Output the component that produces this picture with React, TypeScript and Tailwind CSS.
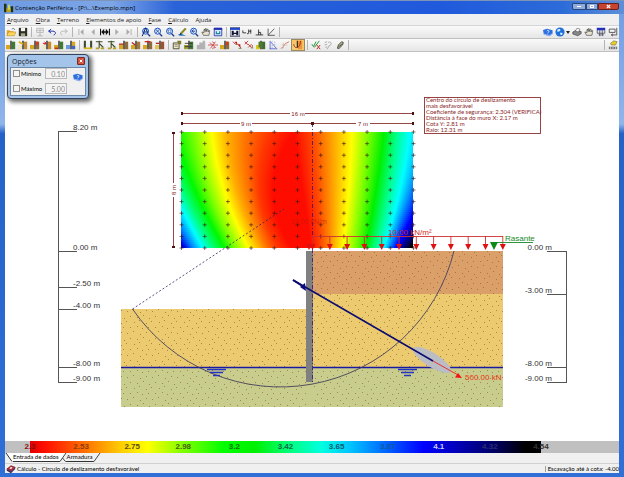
import React, { useState } from 'react';

type Tool = { id: string; label: string; off?: boolean; on?: boolean; menu?: boolean } | null;

const menus = ['Arquivo', 'Obra', 'Terreno', 'Elementos de apoio', 'Fase', 'Cálculo', 'Ajuda'];

const mainTools: Tool[] = [
  { id: 'open', label: 'Abrir' },
  { id: 'save', label: 'Salvar' },
  null,
  { id: 'views', label: 'Vistas', off: true },
  { id: 'undo', label: 'Desfazer' },
  { id: 'redo', label: 'Refazer', off: true },
  null,
  { id: 'first', label: 'Primeira fase', off: true },
  { id: 'prev', label: 'Fase anterior', off: true },
  { id: 'phases', label: 'Lista de fases' },
  { id: 'next', label: 'Fase seguinte', off: true },
  { id: 'last', label: 'Última fase', off: true },
  null,
  { id: 'zoomAll', label: 'Zoom total' },
  { id: 'zoomX', label: 'Zoom duplo' },
  { id: 'zoomWin', label: 'Zoom janela' },
  { id: 'pencil', label: 'Redesenhar' },
  { id: 'zoomPrev', label: 'Zoom anterior' },
  { id: 'hand', label: 'Mover' },
  { id: 'window', label: 'Janela' },
  null,
  { id: 'snap', label: 'Capturas' },
  { id: 'coords', label: 'Coordenadas' },
  { id: 'ortho', label: 'Ortogonal' },
  { id: 'angle', label: 'Ângulo' },
  null,
];

const sideTools: Tool[] = [
  { id: 'help', label: 'Manual' },
  { id: 'globe', label: 'Internet', menu: true },
  { id: 'printer', label: 'Imprimir' },
  { id: 'hand', label: 'Configuração' },
  { id: 'grid', label: 'Barra de ferramentas' },
  { id: 'dock', label: 'Janela principal' },
];

const workTools: Tool[] = [
  { id: 'wallA', label: 'Muro' },
  { id: 'wallB', label: 'Dados do muro' },
  { id: 'wallC', label: 'Terreno trasdós' },
  { id: 'wallD', label: 'Terreno intradós' },
  { id: 'wallE', label: 'Rocha' },
  { id: 'wallF', label: 'Nível freático' },
  null,
  { id: 'trench', label: 'Escavação' },
  { id: 'anchor', label: 'Ancoragem ativa' },
  { id: 'anchor', label: 'Ancoragem passiva' },
  { id: 'wallG', label: 'Escora' },
  { id: 'wallH', label: 'Laje' },
  { id: 'wallI', label: 'Carga no topo' },
  { id: 'wallJ', label: 'Carga no terreno' },
  null,
  { id: 'sheet', label: 'Dados gerais' },
  { id: 'wallK', label: 'Editar fase' },
  { id: 'blocks', label: 'Apagar fase', off: true },
  { id: 'redX', label: 'Esforços' },
  { id: 'wallC', label: 'Empuxos' },
  { id: 'redSlope', label: 'Deslocamentos' },
  { id: 'redTicks', label: 'Cargas' },
  { id: 'wallL', label: 'Pressões' },
  { id: 'curves', label: 'Gráficos' },
  { id: 'slope', label: 'Talude' },
  { id: 'circle', label: 'Círculo de deslizamento', on: true },
  null,
  { id: 'check', label: 'Verificar' },
  { id: 'lens', label: 'Consultar', off: true },
  { id: 'clip', label: 'Listagens' },
  null,
];

// soil in front of the wall, the wall and the soil behind it
const Wall = ({ left, right, children }: { left: string; right: string; children?: React.ReactNode }) => (
  <>
    <path d="M0 6h5v5H0z" fill={left} />
    <path d="M7 2h4v9H7z" fill={right} />
    <path d="M5 1h2v10H5z" fill="#4b4b4b" />
    {children}
  </>
);

const glass = (
  <>
    <circle cx="5.5" cy="5" r="3.6" fill="#dcecff" stroke="#1c55c4" strokeWidth="1.2" />
    <path d="M8 8l3 3" stroke="#1c3f90" strokeWidth="1.6" />
  </>
);

const icons: Record<string, React.ReactNode> = {
  open: (
    <>
      <path d="M1 4h3l1 1h4v5H1z" fill="#e8a320" />
      <path d="M3 6h9l-2 4.500H1z" fill="#ffd65c" stroke="#a86d0c" strokeWidth=".5" />
      <path d="M7 2.500c2-1.500 3-.5 3.500.800" fill="none" stroke="#345" strokeWidth=".8" />
    </>
  ),
  save: (
    <>
      <path d="M1 1h10v10H1z" fill="#2d2f22" />
      <path d="M3.500 1h5v4h-5z" fill="#f5f5f5" />
      <path d="M3.500 7.500h5V11h-5z" fill="#a4a48a" />
    </>
  ),
  views: <path d="M2 1.500h8v5H2zM6 1.500v5M2 4h8M6 7v4M3 10.500h6" fill="none" stroke="#777" />,
  undo: <path d="M2 5l3-2.500M2 5l3 2.500M2 5h5c4 0 4 4 1 4.500" fill="none" stroke="#2436a8" strokeWidth="1.200" />,
  redo: <path d="M10 5L7 2.500M10 5L7 7.500M10 5H5C1 5 1 9 4 9.500" fill="none" stroke="#888" strokeWidth="1.200" />,
  first: <path d="M3 2.500h1v7H3zM9 2.500v7L5 6z" fill="#666" />,
  prev: <path d="M8 2.500v7L4 6z" fill="#666" />,
  phases: <path d="M0 2h1.300v8H0zM10.700 2H12v8h-1.300zM5 2v8L1.500 6zM7 2v8L10.500 6zM5 5h2v2H5z" fill="#111" />,
  next: <path d="M4 2.500v7L8 6z" fill="#666" />,
  last: <path d="M8 2.500h1v7H8zM3 2.500v7L7 6z" fill="#666" />,
  zoomAll: (
    <>
      {glass}
      <path d="M1.500 11L5.500 1l2.500 6M3 6h5" fill="none" stroke="#0d2a78" strokeWidth="1.200" />
    </>
  ),
  zoomX: (
    <>
      {glass}
      <path d="M3.500 3l4 4M7.500 3l-4 4" stroke="#1c3f90" />
    </>
  ),
  zoomWin: (
    <>
      {glass}
      <path d="M4 3.500h3v3H4z" fill="#fff" stroke="#1c3f90" strokeWidth=".7" />
    </>
  ),
  pencil: (
    <>
      <path d="M4 7l5.500-6 2 1.500L6 8.500z" fill="#8b8a25" />
      <path d="M1 9l4-1 6 2.500H3z" fill="#2a7bc6" />
      <path d="M4 7l-.8 2.500L6 8.500z" fill="#222" />
    </>
  ),
  zoomPrev: (
    <>
      {glass}
      <path d="M7.500 5h-4l2-2M3.500 5l2 2" fill="none" stroke="#0d2a78" />
    </>
  ),
  hand: <path d="M3 10L1 6l1.500.3L3.500 7V3l1.200 0 .3 2.500V2h1.300l.2 3.500L7.500 2.500l1 .2V6L9.500 4l1 .5L9.500 10z" fill="#e9e2d3" stroke="#333" strokeWidth=".7" />,
  window: (
    <>
      <path d="M1.500 1.500h9v9h-9z" fill="#dfe8fb" stroke="#2030b0" />
      <path d="M1 1h10v2.500H1z" fill="#2030b0" />
      <path d="M4 5v3h4V5" fill="none" stroke="#1b8b96" strokeWidth="1.500" />
    </>
  ),
  snap: (
    <>
      <path d="M0 1h12v10H0z" fill="#f4f6ff" stroke="#131a3a" />
      <path d="M0 1h12v2.500H0z" fill="#2348d0" />
      <path d="M2 10V4.500h2.500V7h3V4.500H10V10H7.500V8.500h-3V10z" fill="#10142c" />
    </>
  ),
  coords: <path d="M1 4v3h4M6 8h1.500M8 3v5M8 5h3M10.500 3v5" fill="none" stroke="#222" />,
  ortho: <path d="M2 9.500h9M5.500 3v6.500M5.500 6.500h2.500v3" fill="none" stroke="#222" />,
  angle: <path d="M2.500 2v8h8M2.500 10L10 2" fill="none" stroke="#333" strokeWidth=".9" />,
  help: (
    <>
      <path d="M0 3.500L5 2l6.500 2v4.500L7.500 11 1 9z" fill="#2d6fe0" />
      <path d="M1 8.500L7.500 10.300 11.500 8" fill="none" stroke="#cfe0ff" strokeWidth=".8" />
      <path d="M4.500 5c1-1.500 3-1 2.500.5L6 7M5.800 8v.8" fill="none" stroke="#fff" />
    </>
  ),
  globe: (
    <>
      <circle cx="6" cy="6" r="5.500" fill="#2070d8" />
      <path d="M3 3c2-1.500 4-.5 3.500 1S4 6 2.500 5.500zM6 7c2-.5 3.500 0 3 1.500S7 10 6.500 9z" fill="#d8f0ff" />
    </>
  ),
  printer: (
    <>
      <path d="M1 6l4-2 6 1.500V8l-4 2.500L1 8.500z" fill="#888" stroke="#333" strokeWidth=".7" />
      <path d="M4 5l2-3.500 3.500 1L8 6z" fill="#fff" stroke="#333" strokeWidth=".6" />
    </>
  ),
  grid: (
    <>
      <path d="M0 0h12v12H0z" fill="#e4e8f4" />
      <path d="M1 1h10v3H1z" fill="#2430b8" />
      <path d="M1.500 4v3.500h9V4M4.500 4v7M7.500 4v7M3 9.500h3M6.500 9.500h3" fill="none" stroke="#333" strokeWidth=".8" />
    </>
  ),
  dock: <path d="M1.500 2.500h7v4h-7zM10.500 1v9M4 9.500h6M6 8L4 9.500 6 11" fill="none" stroke="#333" strokeWidth=".9" />,
  wallA: <Wall left="#d8a71c" right="#3f7c32" />,
  wallB: <Wall left="#f0e9c8" right="#c08a38"><path d="M1 2l5 3" stroke="#e0b010" strokeWidth="2" /></Wall>,
  wallC: <Wall left="#d8a71c" right="#8f6a3a"><path d="M7 2h3v4H7z" fill="#d43a20" /></Wall>,
  wallD: <Wall left="#f0e9c8" right="#c98a30"><path d="M1 4h4M3 2l2 2-2 2" fill="none" stroke="#d02020" strokeWidth="1.200" /></Wall>,
  wallE: <Wall left="#d8a71c" right="#3f7c32"><path d="M1 9h4v2H1z" fill="#c03518" /></Wall>,
  wallF: <Wall left="#6b9ae0" right="#d8a71c"><path d="M7 7h4v4H7z" fill="#3d66c8" /></Wall>,
  wallG: <Wall left="#d8a71c" right="#8f6a3a"><path d="M0 5h6" stroke="#b02020" strokeWidth="1.500" /></Wall>,
  wallH: <Wall left="#d8a71c" right="#a8763a"><path d="M1 3l4 3" stroke="#c01818" strokeWidth="1.500" /></Wall>,
  wallI: <Wall left="#d8a71c" right="#8f6a3a"><path d="M2 2h7" stroke="#d02020" strokeWidth="1.500" /></Wall>,
  wallJ: <Wall left="#e5c456" right="#a0522d"><path d="M1 4h4" stroke="#c01818" strokeWidth="1.500" /></Wall>,
  wallK: <Wall left="#9aa03a" right="#3f7c32"><path d="M1 4h9M1 8h9" stroke="#333" /></Wall>,
  wallL: <Wall left="#d8c71c" right="#3f6c32"><path d="M3 2h5v7H3z" fill="#4c7a34" /></Wall>,
  trench: (
    <>
      <path d="M1 1h2.500v9H1zM8.500 1H11v9H8.500z" fill="#3d4a35" />
      <path d="M1 9h10v2H1z" fill="#d8b81c" />
    </>
  ),
  anchor: (
    <>
      <path d="M1 2h8M5 1v9M5 4l5 5" fill="none" stroke="#3a4a26" strokeWidth="1.300" />
      <path d="M1 9h4v2H1zM7 9h4v2H7z" fill="#b5a028" />
    </>
  ),
  sheet: (
    <>
      <path d="M1.500 3.500h7v7h-7z" fill="#efe9c0" stroke="#3a3a2a" />
      <path d="M3 5.500h4M3 7.500h4" stroke="#555" strokeWidth=".7" />
      <path d="M6 1h5v4H8z" fill="#7c7c2a" />
    </>
  ),
  blocks: <path d="M1 6h3v5H1zM4 3h4v8H4zM8 1h3v10H8z" fill="#777" />,
  redX: <path d="M0 6h12M2 3l7 6M9 2L3 10M5 2l3 2M5 10l4-1" fill="none" stroke="#c83030" strokeWidth=".9" />,
  redSlope: (
    <>
      <path d="M1 2l3 3h3l4 5" fill="none" stroke="#a04028" />
      <path d="M3 2h3v4zM7 5h3v4z" fill="#d01818" />
      <path d="M8 10h3" stroke="#5a7a30" />
    </>
  ),
  redTicks: (
    <>
      <path d="M1 2l4 4M5 1L1 5M5 5l4 4M9 5L5 9" stroke="#d02020" />
      <path d="M8 9.500h3M10 6v3" stroke="#8b5a20" />
    </>
  ),
  curves: (
    <>
      <path d="M2.500 1v10M2 10.500h9M3 2l7 8" fill="none" stroke="#4058c8" strokeWidth=".9" />
      <path d="M5 1v9M8 2v8" stroke="#90a0e0" strokeWidth=".8" strokeDasharray="1.500 1" />
    </>
  ),
  slope: (
    <>
      <path d="M1 10c4 0 3-5 6-6l4-2" fill="none" stroke="#d06a50" />
      <path d="M4 3v7M2 6h7" stroke="#c8b0a0" strokeWidth=".7" />
    </>
  ),
  circle: (
    <>
      <path d="M0 5h5v6H0z" fill="#f3cf7a" />
      <path d="M6 1h5v10H6z" fill="#e7953a" />
      <path d="M1 5c0 6 8 6 8-4" fill="none" stroke="#b03010" strokeWidth="1.200" />
      <path d="M4.500 1H6v8H4.500z" fill="#3b3020" />
    </>
  ),
  check: (
    <>
      <path d="M1 5l2 3 3-6M4 9L10 1" fill="none" stroke="#2c9a3c" strokeWidth="1.200" />
      <path d="M7 6l4 5M11 6l-4 5" stroke="#c82828" strokeWidth="1.200" />
    </>
  ),
  lens: <path d="M2 3l3-1M2 6l3-1M6 3c4-2 5 2 2 4M8 6l-3 5M3 9l2-1" fill="none" stroke="#555" />,
  clip: <path d="M3 10l1-4 4-4 2 1-1 3-4 4zM5 8l3-3" fill="#b5b58c" stroke="#222" strokeWidth=".9" />,
  lamp: (
    <>
      <path d="M3 4l4-3 4 1-2 4H4z" fill="#e8d020" stroke="#555" strokeWidth=".6" />
      <path d="M1 8h10v3H1z" fill="#777" />
      <path d="M3 8v3M6 8v3M9 8v3" stroke="#eee" strokeWidth=".7" />
    </>
  ),
  app: (
    <>
      <path d="M0 1h3v10H0zM8 4h3v7H8z" fill="#223014" />
      <path d="M3 6h5v5H3z" fill="#b8a020" />
      <path d="M5 2h2v6H5z" fill="#d9e04a" />
    </>
  ),
  book: (
    <>
      <path d="M1 6l5-4 5 2-5 5z" fill="#c02838" stroke="#4a0a18" strokeWidth=".7" />
      <path d="M1 6v2l5 3 5-5V4L6 9z" fill="#3a2a5a" />
      <path d="M4 5l2-1.500 2 1L6 6z" fill="#fff" />
    </>
  ),
};

const Icon = ({ id }: { id: string }) => (
  <svg viewBox="0 0 12 12" className="block shrink-0 w-[10px] h-[10px]" aria-hidden="true">
    {icons[id]}
  </svg>
);

const ToolButtons = ({ tools }: { tools: Tool[] }) => (
  <>
    {tools.map((tool, index) =>
      tool === null ? (
        <span key={index} className="w-px h-[10px] mx-[2px] bg-[#b4b4b4]" />
      ) : (
        <button
          key={index}
          type="button"
          aria-label={tool.label}
          className={
            tool.on
              ? 'w-[14px] h-3 flex items-center justify-center border border-[#9a8a60] bg-[#fbc566]'
              : tool.off
                ? 'w-3 h-3 flex items-center justify-center opacity-50'
                : tool.menu
                  ? 'w-[17px] h-3 flex items-center justify-center gap-px'
                  : 'w-3 h-3 flex items-center justify-center'
          }
        >
          <Icon id={tool.id} />
          {tool.menu && (
            <svg viewBox="0 0 4 3" className="w-1 h-[3px]" aria-hidden="true"><path d="M0 0h4L2 3z" fill="#222" /></svg>
          )}
        </button>
      )
    )}
  </>
);

// x of each safety factor colour at the top, middle and bottom of the mesh
const isolines: [string, number, number, number][] = [
  ['#0000e0', -70, -36, 3],
  ['#0080ff', -55, -22, 11],
  ['#00ffff', -42, -10, 21],
  ['#00ff80', -24, 1, 31],
  ['#00f800', -6, 14, 43],
  ['#80ff00', 14, 28, 54],
  ['#ffff00', 31, 43, 67],
  ['#ffb000', 46, 55, 78],
  ['#ff7000', 66, 68, 86],
  ['#ff3800', 88, 78, 96],
  ['#ff0c00', 112, 92, 110],
  ['#ff0c00', 113, 122, 130],
  ['#ff4800', 131, 136, 140],
  ['#ff8c00', 146, 148, 149],
  ['#ffff00', 171, 168, 162],
  ['#80ff00', 187, 181, 174],
  ['#00f000', 203, 195, 185],
  ['#00ff90', 216, 208, 195],
  ['#00ffff', 229, 219, 203],
  ['#0080ff', 250, 231, 209],
  ['#0000ff', 266, 243, 215],
  ['#000000', 310, 275, 230],
];

const along = (top: number, mid: number, bottom: number, t: number) =>
  top * (1 - t) * (1 - 2 * t) + mid * 4 * t * (1 - t) + bottom * t * (2 * t - 1);

const SafetyMesh = () => {
  const rows = Array.from({ length: 58 }, (_, i) => i);
  const nodes = Array.from({ length: 11 }, (_, i) => i);
  return (
    <g>
      <defs>
        {rows.map(i => (
          <linearGradient key={i} id={`row-${i}`} gradientUnits="userSpaceOnUse" x1="81" x2="581" y1="0" y2="0">
            {isolines.map(([color, top, mid, bottom], n) => (
              <stop key={n} offset={(along(top, mid, bottom, i / 57) + 100) / 500} stopColor={color} />
            ))}
          </linearGradient>
        ))}
      </defs>
      {rows.map(i => (
        <rect key={i} x="181" y={132 + i * 2} width="232" height="2" fill={`url(#row-${i})`} shapeRendering="crispEdges" />
      ))}
      {nodes.map(r =>
        nodes.map(c => (
          <path
            key={`${r}-${c}`}
            d={`M${179.5 + c * 23.2} ${132 + r * 11.6}h4m-2 -2v4`}
            stroke="#3a1408"
            strokeOpacity=".75"
            strokeWidth=".8"
          />
        ))
      )}
    </g>
  );
};

const leftLevels: [number, string][] = [
  [131, '8.20 m'],
  [251, '0.00 m'],
  [287, '-2.50 m'],
  [309, '-4.00 m'],
  [367, '-8.00 m'],
  [382, '-9.00 m'],
];

const rightLevels: [number, string][] = [
  [251, '0.00 m'],
  [294, '-3.00 m'],
  [367, '-8.00 m'],
  [382, '-9.00 m'],
];

const result = [
  'Centro do círculo de deslizamento',
  'mais desfavorável',
  'Coeficiente de segurança: 2.304 (VERIFICA)',
  'Distância à face do muro X: 2.17 m',
  'Cota Y: 2.81 m',
  'Raio: 12.31 m',
];

const Section = () => (
  <svg viewBox="5 52 614 389" className="block w-full h-auto font-['Liberation_Sans',sans-serif]">
    <defs>
      <pattern id="grain" width="25" height="22" patternUnits="userSpaceOnUse">
        <path
          d="M2 3h1v1h-1zM8 1h1v1h-1zM15 4h1v1h-1zM21 2h1v1h-1zM5 8h1v1h-1zM12 9h1v1h-1zM18 7h1v1h-1zM24 10h1v1h-1zM1 13h1v1h-1zM9 14h1v1h-1zM14 12h1v1h-1zM21 15h1v1h-1zM5 19h1v1h-1zM12 18h1v1h-1zM17 20h1v1h-1zM23 19h1v1h-1z"
          fill="#8a6420"
          fillOpacity=".65"
        />
      </pattern>
    </defs>

    {/* soil layers */}
    <path d="M121 309h185v58H121zM313 294h190v73H313z" fill="#eccb70" />
    <path d="M313 251h190v43H313z" fill="#dba069" />
    <path d="M121 367h382v40H121z" fill="#c8cc8c" />
    <path d="M121 309h185v98H121zM313 251h190v156H313z" fill="url(#grain)" />
    <path d="M121 367.500h382" stroke="#1a1aa0" strokeWidth="1.500" />

    <SafetyMesh />

    <path d="M306 251h7v131h-7z" fill="#808080" />
    <path d="M312.500 123v259" stroke="#3a1478" strokeDasharray="4 2 1 2" strokeWidth=".8" />

    {/* slip circle */}
    <path d="M132.500 309A179 179 0 0 0 454 251" fill="none" stroke="#45405c" strokeWidth=".9" />
    <path d="M132.500 309L284 209" stroke="#30285a" strokeWidth=".8" strokeDasharray="2 2" />

    {/* water table */}
    <path d="M207 369.500h19M210 372.500h13M213 375.500h7M398 369.500h19M401 372.500h13M404 375.500h7" stroke="#2434c0" strokeWidth="1.300" />

    {/* anchor */}
    <ellipse cx="432" cy="360" rx="22" ry="7" fill="#babdc4" transform="rotate(32 432 360)" />
    <path d="M293 280L433 361" stroke="#0c0c70" strokeWidth="1.500" />
    <path d="M300 287l5-4 1 8z" fill="#0c0c80" />
    <path d="M293 280l11 7" stroke="#0c0c70" strokeWidth="2" />
    <path d="M433 361l25 14" stroke="#f02020" strokeWidth=".9" />
    <path d="M462 378l-7-.5 3-4.500z" fill="#f01414" />
    <text x="465" y="380" fontSize="8" fill="#e83820">500.00 kN</text>

    {/* surcharge */}
    <path d="M312 236.500h191" stroke="#d03030" strokeWidth=".9" />
    {Array.from({ length: 12 }, (_, i) => 312.5 + i * 17.3).map(x => (
      <g key={x}>
        <path d={`M${x} 236v8`} stroke="#d03030" strokeWidth=".9" />
        <path d={`M${x - 3} 244h6l-3 6z`} fill="#e01010" />
      </g>
    ))}
    <path d="M306 244h6l-3 6z" fill="#e01010" />
    <text x="388" y="235" fontSize="8" fill="#d02828">10.00 kN/m²</text>
    <text x="291" y="224" fontSize="7" fill="#c01800" fillOpacity=".7">10.00 kN/m</text>

    <text x="505" y="241" fontSize="8" fill="#188a28">Rasante</text>
    <path d="M494 242.500h39" stroke="#188a28" strokeWidth=".9" />
    <path d="M490 242h8l-4 8z" fill="#0c8a18" />

    {/* mesh dimensions */}
    <g stroke="#8a3030" strokeWidth=".9">
      <path d="M181 113.500h109M305 113.500h108M181 123.500h59M252 123.500h104M370 123.500h43M173.500 132v51M173.500 197v51" />
    </g>
    <path d="M181 112h2v3h-2zM412 112h2v3h-2zM181 122h2v3h-2zM311 122h3v3h-3zM412 122h2v3h-2zM172 132h3v2h-3zM172 246h3v2h-3z" fill="#501010" />
    <g fontSize="6" fill="#7a2020" textAnchor="middle">
      <text x="298" y="116">16 m</text>
      <text x="246" y="126">9 m</text>
      <text x="363" y="126">7 m</text>
      <text x="0" y="0" transform="translate(176 190) rotate(-90)">8 m</text>
    </g>

    <rect x="424.500" y="97.500" width="116" height="36" fill="#fff" stroke="#8a3030" strokeWidth=".9" />
    <g fontSize="6" fill="#8a2828" className="font-['Lato',sans-serif]">
      {result.map((line, i) => (
        <text key={line} x="426" y={102 + i * 6}>{line}</text>
      ))}
    </g>

    {/* level rulers */}
    <g stroke="#555" fill="none">
      <path d="M58.500 131v252M566.500 251v132" />
      {leftLevels.map(([y]) => <path key={y} d={`M58 ${y + 0.5}h19`} />)}
      {rightLevels.map(([y]) => <path key={y} d={`M547 ${y + 0.5}h20`} />)}
    </g>
    <g fontSize="8" fill="#333">
      {leftLevels.map(([y, label]) => <text key={y} x="73" y={y - 1}>{label}</text>)}
      {rightLevels.map(([y, label]) => <text key={y} x="552" y={y - 1} textAnchor="end">{label}</text>)}
    </g>
  </svg>
);

const OptionRow = ({ id, label, value }: { id: string; label: string; value: string }) => {
  const [checked, setChecked] = useState(false);
  return (
    <div className="flex items-center h-[11px]">
      <input
        id={id}
        type="checkbox"
        checked={checked}
        onChange={() => setChecked(!checked)}
        className="appearance-none w-[7px] h-[7px] border border-[#8e8f8f] bg-[#f4f4f4] checked:bg-[#3a74d8]"
      />
      <label htmlFor={id} className="ml-px w-6 text-[6px] leading-none text-black">{label}</label>
      <input
        aria-label={`Valor ${label}`}
        defaultValue={value}
        disabled={!checked}
        className="w-[22px] h-[11px] border border-[#b8b8b8] bg-[#f4f4f4] px-px text-right text-[7px] leading-none text-[#888]"
      />
    </div>
  );
};

const OptionsPanel = () => (
  <section
    aria-label="Opções"
    className="absolute left-[2px] top-[2px] w-[82px] rounded-sm border border-[#33455c] bg-[#a4c4ea] px-[2px] pb-[2px] shadow-[2px_2px_4px_1px_rgba(0,0,0,0.6)]"
  >
    <header className="flex items-center justify-between h-3 pl-[2px] pr-px">
      <h2 className="text-[7px] leading-none text-[#1a2430] font-['Open_Sans',sans-serif]">Opções</h2>
      <button type="button" aria-label="Fechar" className="w-2 h-2 flex items-center justify-center rounded-[1px] border border-[#7c2a20] bg-[#d0503c]">
        <svg viewBox="0 0 6 6" className="w-1 h-1"><path d="M1 1l4 4M5 1L1 5" stroke="#fff" strokeWidth="1.500" /></svg>
      </button>
    </header>
    <div className="flex justify-between border border-[#6c88a8] bg-[#f0f0f0] pl-[2px] pr-[2px] pb-px">
      <div className="flex flex-col gap-1">
        <OptionRow id="minimo" label="Mínimo" value="0.10" />
        <OptionRow id="maximo" label="Máximo" value="5.00" />
      </div>
      <button type="button" aria-label="Ajuda das opções" className="mt-1 w-[10px] h-[10px]">
        <Icon id="help" />
      </button>
    </div>
  </section>
);

const legend: [string, string][] = [
  ['2.3', 'text-[#8a1010]'],
  ['2.53', 'text-[#8a3c08]'],
  ['2.75', 'text-[#5c5010]'],
  ['2.98', 'text-[#4a6010]'],
  ['3.2', 'text-[#107010]'],
  ['3.42', 'text-[#0c6848]'],
  ['3.65', 'text-[#0c5a70]'],
  ['3.87', 'text-[#1058a0]'],
  ['4.1', 'text-[#c8d0ff]'],
  ['4.32', 'text-[#2c2c78]'],
  ['4.54', 'text-[#333333]'],
];

const App: React.FC = () => {
  const [tab, setTab] = useState('dados');

  return (
    <div className="min-h-screen flex flex-col bg-[linear-gradient(180deg,#6e9be4_0%,#8fb6ea_26%,#2562c8_28%,#2f6fd6_100%)] px-[5px] pb-1 font-['Lato',sans-serif] text-black">
      <header className="-mx-[5px] flex items-center h-[14px] pl-[4px] pr-[5px] border-t border-[#7d93b8] bg-[linear-gradient(90deg,#6e9be4_0%,#7da6e6_18%,#2a62d8_28%,#2059dc_70%,#2c6bd8_90%,#5e8fd8_100%)]">
        <Icon id="app" />
        <h1 className="ml-px text-[6px] leading-none font-['Open_Sans',sans-serif]">Contenção Periférica - [P:\...\Exemplo.mpn]</h1>
        <div className="ml-auto flex self-start mt-[2px]">
          <button type="button" aria-label="Minimizar" className="w-[14px] h-[7px] flex items-center justify-center rounded-bl-[2px] border border-[#29477c] bg-[#8eabdc]">
            <span className="w-1 h-px bg-white" />
          </button>
          <button type="button" aria-label="Maximizar" className="w-3 h-[7px] flex items-center justify-center border border-[#29477c] bg-[#8eabdc]">
            <span className="w-1 h-[3px] border border-white" />
          </button>
          <button type="button" aria-label="Fechar janela" className="w-[21px] h-[7px] flex items-center justify-center rounded-br-[2px] border border-[#6b2020] bg-[#c8442e]">
            <svg viewBox="0 0 6 6" className="w-[5px] h-[5px]"><path d="M1 1l4 4M5 1L1 5" stroke="#fff" strokeWidth="1.500" /></svg>
          </button>
        </div>
      </header>

      <nav className="flex items-center gap-[7px] h-3 pl-[2px] bg-[#f0f0f0] border-b border-[#d4d4d4]">
        {menus.map(menu => {
          const at = menu === 'Ajuda' ? 1 : 0;
          return (
            <button key={menu} type="button" className="text-[6px] leading-none text-[#1a1a1a] font-['Open_Sans',sans-serif]">
              {menu.slice(0, at)}
              <span className="underline">{menu[at]}</span>
              {menu.slice(at + 1)}
            </button>
          );
        })}
      </nav>

      <div className="flex items-center h-[13px] bg-linear-to-b from-[#fafafa] to-[#e6e6e6] border-b border-[#c0c0c0]">
        <ToolButtons tools={mainTools} />
        <div className="ml-auto flex items-center">
          <ToolButtons tools={sideTools} />
        </div>
      </div>
      <div className="flex items-center h-[13px] bg-linear-to-b from-[#fafafa] to-[#e6e6e6] border-b border-[#c0c0c0]">
        <ToolButtons tools={workTools} />
        <div className="ml-auto flex items-center">
          <ToolButtons tools={[null, { id: 'lamp', label: 'Iluminação' }]} />
        </div>
      </div>

      <main className="relative grow bg-white">
        <Section />
        <OptionsPanel />
      </main>

      <div className="h-3 bg-[#c0c0c0] pl-[25px] pr-[78px]">
        <div className="flex items-center justify-between h-full bg-[linear-gradient(90deg,#e00000_0%,#ff1000_3%,#ff8000_12%,#ffd000_18%,#ffff00_23%,#80ff00_30%,#00ff00_38%,#00f000_44%,#00ff80_51%,#00ffe0_57%,#00c0ff_63%,#0060ff_70%,#0000ff_77%,#0000c0_83%,#000060_91%,#000000_97%)]">
          {legend.map(([value, color]) => (
            <span key={value} className="w-0 flex justify-center">
              <span className={`${color} text-[8px] leading-none font-bold font-['Liberation_Sans',sans-serif]`}>{value}</span>
            </span>
          ))}
        </div>
      </div>

      <div className="flex h-[10px] bg-[#f0f0f0] text-[6px] leading-none">
        <svg viewBox="0 0 8 9" className="w-2 h-[9px]"><path d="M1 0l6 8.500h1V0z" fill="#fff" /><path d="M1 0l6 8.500" stroke="#333" fill="none" /></svg>
        <button type="button" onClick={() => setTab('dados')} aria-pressed={tab === 'dados'} className="h-[9px] border-b border-[#333] bg-white">
          Entrada de dados
        </button>
        <svg viewBox="0 0 8 9" className="w-2 h-[9px]"><path d="M0 8.500L6 0H0z" fill="#fff" /><path d="M0 8.500h1L7 0M3.500 5l3 3.500h2" stroke="#333" fill="none" strokeWidth=".9" /></svg>
        <button type="button" onClick={() => setTab('armadura')} aria-pressed={tab === 'armadura'} className="h-[9px] border-b border-[#333]">
          Armadura
        </button>
        <svg viewBox="0 0 8 9" className="w-2 h-[9px]"><path d="M0 8.500h1L7 0" stroke="#333" fill="none" strokeWidth=".9" /></svg>
      </div>

      <footer className="flex items-center justify-between h-[10px] bg-[#f0f0f0] border-t border-[#d0d0d0] text-[6px] leading-none">
        <div className="flex items-center gap-px pl-px">
          <Icon id="book" />
          <p>Cálculo - Círculo de deslizamento desfavorável</p>
        </div>
        <p className="border-l border-[#a0a0a0] pl-[2px]">Escavação até à cota: -4.00</p>
      </footer>
    </div>
  );
};

export default App;
